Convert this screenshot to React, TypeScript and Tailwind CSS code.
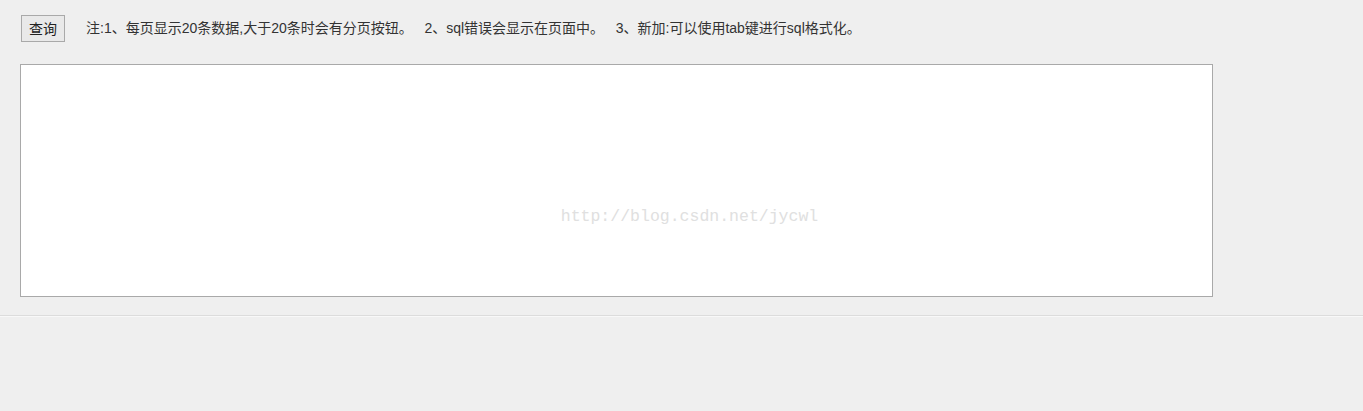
export default function App() {
  return (
    <div
      className="h-[411px] w-full overflow-hidden bg-[#efefef] text-[#333]"
      style={{ fontFamily: '"Liberation Sans", Arial, "Noto Sans CJK SC", sans-serif' }}
    >
      <div className="px-5 pt-[15px]">
        <div className="flex items-center">
          <button className="ml-px h-[27px] w-[44px] border border-[#a9a9a9] bg-[#e9e9e9] text-[14px] leading-none text-[#222]">
            查询
          </button>
          <span className="ml-[21px] text-[14px] text-[#333]">
            注:1、每页显示20条数据,大于20条时会有分页按钮。&nbsp;&nbsp;&nbsp;2、sql错误会显示在页面中。&nbsp;&nbsp;&nbsp;3、新加:可以使用tab键进行sql格式化。
          </span>
        </div>
        <div className="mt-[22px] flex h-[233px] w-[1193px] items-center justify-center border border-[#a9a9a9] bg-white">
          <span
            className="mt-[74px] ml-[146px] text-[16.5px] text-[#e0e0e0]"
            style={{ fontFamily: '"Liberation Mono", "Courier New", monospace' }}
          >
            http://blog.csdn.net/jycwl
          </span>
        </div>
      </div>
      <div className="mt-[18px] border-t border-[#dcdcdc] border-b border-b-[#f8f8f8]" />
    </div>
  );
}
